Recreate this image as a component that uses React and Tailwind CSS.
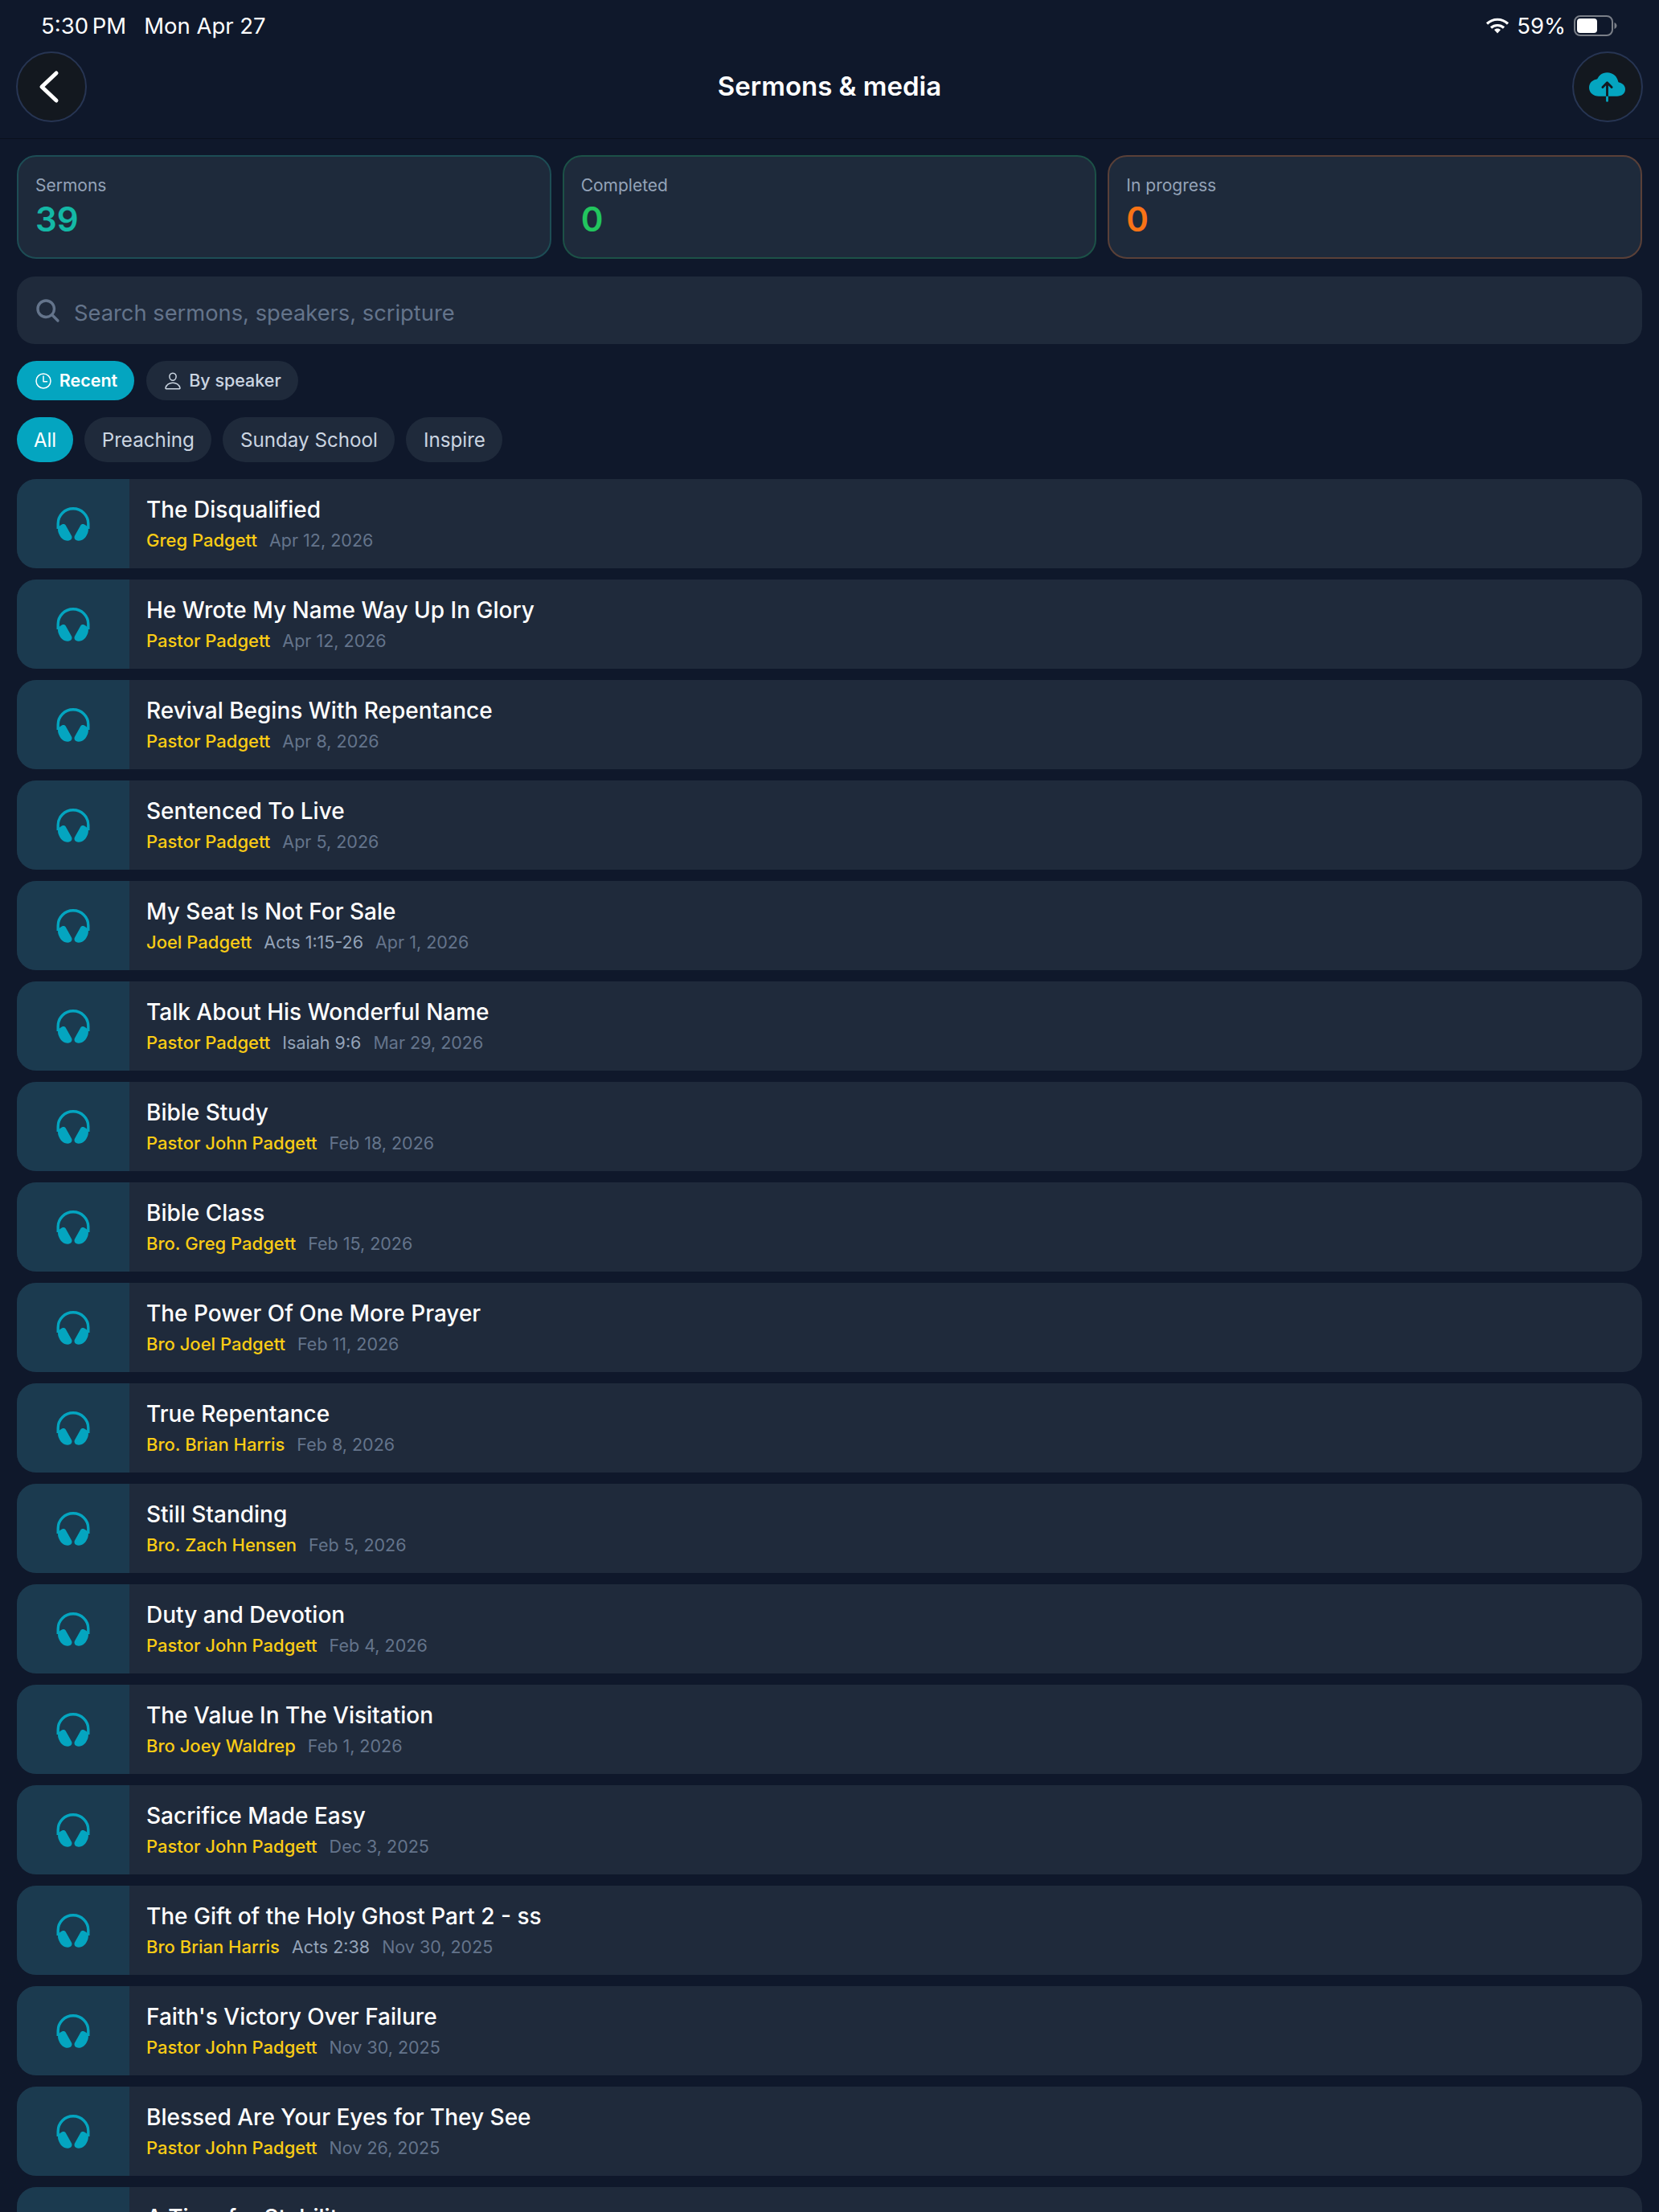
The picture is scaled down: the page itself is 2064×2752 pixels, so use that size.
import React from "react";
import { IoCloudUpload, IoSearch, IoTimeOutline, IoPersonOutline } from "react-icons/io5";

const sermons = [
  ["The Disqualified", "Greg Padgett", "", "Apr 12, 2026"],
  ["He Wrote My Name Way Up In Glory", "Pastor Padgett", "", "Apr 12, 2026"],
  ["Revival Begins With Repentance", "Pastor Padgett", "", "Apr 8, 2026"],
  ["Sentenced To Live", "Pastor Padgett", "", "Apr 5, 2026"],
  ["My Seat Is Not For Sale", "Joel Padgett", "Acts 1:15-26", "Apr 1, 2026"],
  ["Talk About His Wonderful Name", "Pastor Padgett", "Isaiah 9:6", "Mar 29, 2026"],
  ["Bible Study", "Pastor John Padgett", "", "Feb 18, 2026"],
  ["Bible Class", "Bro. Greg Padgett", "", "Feb 15, 2026"],
  ["The Power Of One More Prayer", "Bro Joel Padgett", "", "Feb 11, 2026"],
  ["True Repentance", "Bro. Brian Harris", "", "Feb 8, 2026"],
  ["Still Standing", "Bro. Zach Hensen", "", "Feb 5, 2026"],
  ["Duty and Devotion", "Pastor John Padgett", "", "Feb 4, 2026"],
  ["The Value In The Visitation", "Bro Joey Waldrep", "", "Feb 1, 2026"],
  ["Sacrifice Made Easy", "Pastor John Padgett", "", "Dec 3, 2025"],
  ["The Gift of the Holy Ghost Part 2 - ss", "Bro Brian Harris", "Acts 2:38", "Nov 30, 2025"],
  ["Faith's Victory Over Failure", "Pastor John Padgett", "", "Nov 30, 2025"],
  ["Blessed Are Your Eyes for They See", "Pastor John Padgett", "", "Nov 26, 2025"],
  ["A Time for Stability", "Pastor John Padgett", "", "Nov 23, 2025"],
];

function Headphones() {
  return (
    <svg width="42" height="42" viewBox="0 0 42 42" fill="#04a5c0">
      <path d="M2.200 27V20.500C2.200 10.100 10.600 1.800 21 1.800s18.800 8.300 18.800 18.700V27" fill="none" stroke="#04a5c0" strokeWidth="3.400" />
      <path d="M7 21.500C9 20.500 11 21 12 23L19 35.500C20.500 38.500 18.500 41.500 14.500 41.800C9 42 5 38 2.800 32C1.200 27 2 24 7 21.500Z" />
      <path d="M35 21.500C33 20.500 31 21 30 23L23 35.500C21.500 38.500 23.500 41.500 27.500 41.800C33 42 37 38 39.200 32C40.800 27 40 24 35 21.500Z" />
    </svg>
  );
}

function Stat({ label, value, border, color }) {
  return (
    <div className={`flex-1 h-[129px] rounded-[24px] border-2 ${border} bg-[#1e2a3b] pl-[21px] pt-[21px]`}>
      <div className="text-[21px] leading-[30px] text-[#94a3b8]">{label}</div>
      <div className={`mt-[2px] text-[42px] leading-[50px] font-semibold ${color}`}>{value}</div>
    </div>
  );
}

function Row({ title, speaker, ref_, date }) {
  return (
    <div className="flex h-[111px] shrink-0 rounded-[24px] overflow-hidden bg-[#1f2a3b]">
      <div className="w-[140px] shrink-0 bg-[#1b3a4f] flex items-center justify-center">
        <Headphones />
      </div>
      <div className="flex-1 pl-[21px] pt-[19px]">
        <div className="text-[28px] leading-[38px] font-medium text-white">{title}</div>
        <div className="mt-[3px] flex items-center gap-[15px] text-[21.5px] leading-[32px]">
          <span className="font-medium text-[22px] text-[#facc15]">{speaker}</span>
          {ref_ ? <span className="text-[#94a3b8]">{ref_}</span> : null}
          <span className="text-[#64748b]">{date}</span>
        </div>
      </div>
    </div>
  );
}

export default function App() {
  return (
    <div className="w-[2064px] h-[2752px] overflow-hidden bg-[#0f182b] font-['Inter',sans-serif]">
      <header className="h-[173px] border-b border-[#0a101c]">
        <div className="h-[64px] flex items-start justify-between pl-[51px] pr-[52px] pt-[14px] text-white text-[27.5px] leading-[36px]">
          <div className="flex gap-[22px]">
            <span className="[word-spacing:-3px]">5:30 PM</span>
            <span>Mon Apr 27</span>
          </div>
          <div className="flex items-center">
            <svg width="30" height="22" viewBox="0 0 30 22" fill="none" stroke="#fff" strokeWidth="3.200" className="mr-[9px]">
              <path d="M2 8.500C9.500 1.500 20.500 1.500 28 8.500" />
              <path d="M7 13.500C11.500 9.500 18.500 9.500 23 13.500" />
              <path d="M15 14.500c-1.600 0-3 .6-4 1.500l4 4.600 4-4.600c-1-.9-2.400-1.500-4-1.500z" fill="#fff" stroke="none" />
            </svg>
            <span>59%</span>
            <svg width="54" height="26" viewBox="0 0 54 26" className="ml-[10px]">
              <rect x="1" y="1" width="47" height="24" rx="7" fill="none" stroke="#7a7f88" strokeWidth="2" />
              <rect x="4" y="4" width="25" height="18" rx="4" fill="#fff" />
              <path d="M50.500 9c2 1 3 2.500 3 4s-1 3-3 4z" fill="#7a7f88" />
            </svg>
          </div>
        </div>
        <div className="h-[88px] flex items-center justify-between pl-[20px] pr-[20px]">
          <button className="w-[88px] h-[88px] rounded-full bg-[#13181f] border-2 border-[#273553] flex items-center justify-center">
            <svg width="26" height="42" viewBox="0 0 26 42" fill="none" stroke="#fff" strokeWidth="5" strokeLinecap="round" strokeLinejoin="round" className="mr-[7px]">
              <path d="M22 4L4 21L22 38" />
            </svg>
          </button>
          <div className="text-[33px] font-semibold text-white">Sermons &amp; media</div>
          <button className="w-[88px] h-[88px] rounded-full bg-[#13181f] border-2 border-[#273553] flex items-center justify-center">
            <IoCloudUpload className="w-[45px] h-[45px] text-[#04a5c0]" />
          </button>
        </div>
      </header>

      <main className="px-[21px] pt-[20px] flex flex-col">
        <div className="flex gap-[14px]">
          <Stat label="Sermons" value="39" border="border-[#1d4d55]" color="text-[#14b8a6]" />
          <Stat label="Completed" value="0" border="border-[#1c5147]" color="text-[#22c55e]" />
          <Stat label="In progress" value="0" border="border-[#5a4038]" color="text-[#f97316]" />
        </div>

        <div className="mt-[22px] h-[84px] rounded-[22px] bg-[#1f2a3b] flex items-center pl-[21px] gap-[15px]">
          <IoSearch className="w-[35px] h-[35px] text-[#64748b]" />
          <span className="text-[27.3px] mt-[8px] text-[#64748b]">Search sermons, speakers, scripture</span>
        </div>

        <div className="mt-[21px] flex gap-[15px]">
          <div className="h-[49px] w-[146px] rounded-full bg-[#04a5c0] flex items-center justify-center gap-[8px] text-white text-[21.5px] font-semibold">
            <IoTimeOutline className="w-[24px] h-[24px]" />
            Recent
          </div>
          <div className="h-[49px] w-[189px] rounded-full bg-[#1f2a3b] flex items-center justify-center gap-[8px] text-[#cbd5e1] text-[21.5px] font-medium">
            <IoPersonOutline className="w-[24px] h-[24px]" />
            By speaker
          </div>
        </div>

        <div className="mt-[21px] flex gap-[14px]">
          <div className="h-[56px] px-[21px] pt-[2px] rounded-full bg-[#04a5c0] flex items-center text-white text-[24px]">All</div>
          {["Preaching", "Sunday School", "Inspire"].map((c) => (
            <div key={c} className="h-[56px] px-[21.5px] pt-[2px] rounded-full bg-[#1f2a3b] flex items-center text-[#cbd5e1] text-[24.2px]">{c}</div>
          ))}
        </div>

        <div className="mt-[21px] flex flex-col gap-[14px]">
          {sermons.map((s) => (
            <Row key={s[0]} title={s[0]} speaker={s[1]} ref_={s[2]} date={s[3]} />
          ))}
        </div>
      </main>
    </div>
  );
}
